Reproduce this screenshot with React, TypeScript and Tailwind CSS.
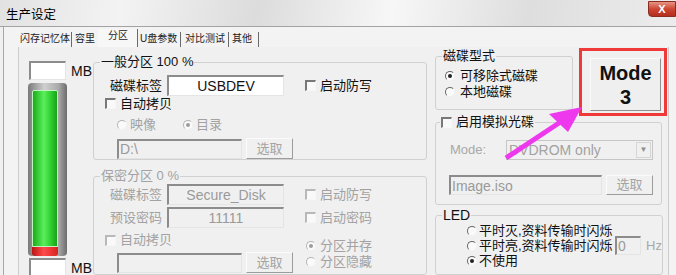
import React from "react";

const FONT = "font-['Liberation_Sans','Noto_Sans_CJK_SC',sans-serif]";

function Check({ dis }: { dis?: boolean }) {
  return (
    <span
      className={`inline-block w-[11px] h-[11px] shrink-0 border-t-2 border-l-2 border-b border-r border-b-[#f6f6f6] border-r-[#f6f6f6] bg-[#f9f9f9] ${
        dis ? "border-t-[#b8b8b8] border-l-[#b8b8b8]" : "border-t-[#787878] border-l-[#787878]"
      }`}
    />
  );
}

function Radio({ on, dis }: { on?: boolean; dis?: boolean }) {
  return (
    <span
      className={`inline-flex items-center justify-center w-[10px] h-[10px] shrink-0 rounded-full border-[1.5px] border-r-[#f2f2f2] border-b-[#f2f2f2] bg-[#fafafa] ${
        dis ? "border-t-[#b4b4b4] border-l-[#b4b4b4]" : "border-t-[#666666] border-l-[#666666]"
      }`}
    >
      {on && <span className={`w-[4px] h-[4px] rounded-full ${dis ? "bg-[#9c9c9c]" : "bg-[#222222]"}`} />}
    </span>
  );
}

function TextBox({
  className,
  children,
  dis,
  center,
}: {
  className: string;
  children?: React.ReactNode;
  dis?: boolean;
  center?: boolean;
}) {
  return (
    <div
      className={`${className} shrink-0 flex items-center border-t-2 border-l-2 border-b border-r border-t-[#8c8c8c] border-l-[#8c8c8c] border-b-[#e4e4e4] border-r-[#e4e4e4] text-[14px] leading-[16px] px-[1px] ${
        center ? "justify-center" : "justify-start"
      } ${dis ? "bg-[#f0f0f0] text-[#9a9a9a]" : "bg-white text-[#111111]"}`}
    >
      {children}
    </div>
  );
}

function SelBtn({ className }: { className: string }) {
  return (
    <div
      className={`${className} shrink-0 flex items-center justify-center border border-t-[#fbfbfb] border-l-[#fbfbfb] border-r-[#9c9c9c] border-b-[#9c9c9c] bg-[#f0f0f0] text-[13px] text-[#a4a4a4]`}
    >
      选取
    </div>
  );
}

export default function App() {
  return (
    <div className={`relative w-[676px] h-[275px] overflow-hidden bg-[#f0f0f0] text-[13px] leading-[16px] text-[#111111] ${FONT}`}>
      {/* Title bar */}
      <div className="h-[27px] border-b border-[#a3a3a3] flex items-start justify-between bg-[linear-gradient(100deg,#e2e2e2_0%,#f3f3f3_18%,#dcdcdc_38%,#f7f7f7_58%,#dedede_78%,#ececec_100%)]">
        <div className="pl-[6px] pt-[8px] text-[12.5px] leading-[14px] text-black">生产设定</div>
        <div className="mt-[1px] w-[28px] h-[16px] rounded-bl-[4px] border border-[#8c2b20] bg-[linear-gradient(to_bottom,#e69584,#cc4633_50%,#b52d1d)] flex items-center justify-center text-white font-bold text-[11px] leading-[11px]">
          X
        </div>
      </div>

      {/* Body */}
      <div className="ml-[3px] h-[248px] border-l border-[#a8a8a8] bg-[#f3f3f3]">
        {/* Tabs */}
        <div className="h-[20px] flex items-end text-[10px] leading-[14px] text-[#222222] whitespace-nowrap">
          <div className="w-[68px] h-[15px] pl-[16px] border-r border-[#6a6a6a]">闪存记忆体</div>
          <div className="w-[26px] h-[15px] pl-[3px]">容里</div>
          <div className="w-[40px] h-[18px] pl-[10px] border-r border-[#6a6a6a] bg-[#f7f7f7]">分区</div>
          <div className="w-[43px] h-[15px] pl-[2px] border-r border-[#6a6a6a]">U盘参数</div>
          <div className="w-[48px] h-[15px] pl-[4px] border-r border-[#6a6a6a]">对比测试</div>
          <div className="w-[30px] h-[15px] pl-[3px] border-r border-[#6a6a6a]">其他</div>
        </div>

        {/* Tab page */}
        <div className="ml-[14px] w-[651px] h-[228px] border-l border-r border-[#cdcdcd] bg-[#f0f0f0] flex">
          {/* Left column: capacity bar */}
          <div className="w-[74px] pl-[9px] flex flex-col">
            <div className="mt-[14px] flex items-center">
              <TextBox className="w-[37px] h-[19px] ml-[1px]" />
              <span className="ml-[5px] text-[14px]">MB</span>
            </div>
            <div className="mt-[3px] w-[39px] h-[180px] rounded-[4px] bg-[linear-gradient(to_right,#7a7a7a,#cfcfcf_42%,#a9a9a9_78%,#6c6c6c)] pt-[7px] pl-[4px]">
              <div className="w-[26px] h-[157px] rounded-t-[2px] border border-[#bff5bf] bg-[linear-gradient(to_right,#1aab1a,#5bef5b_45%,#33d133_72%,#17a317)]" />
              <div className="w-[26px] h-[9px] rounded-b-[3px] bg-[linear-gradient(to_right,#bd1313,#ff4b4b_45%,#d82222)]" />
            </div>
            <div className="mt-[2px] flex items-center">
              <TextBox className="w-[37px] h-[19px] ml-[1px]" />
              <span className="ml-[5px] text-[14px]">MB</span>
            </div>
          </div>

          {/* Middle column */}
          <div className="w-[334px] flex flex-col">
            <fieldset className="mt-[7px] h-[112px] border border-[#d0d0d0] rounded-[3px]">
              <legend className="ml-[6px] px-[1px] text-[13px] leading-[16px]">一般分区 100 %</legend>
              <div className="mt-[5px] h-[21px] flex items-center">
                <span className="ml-[16px] w-[57px]">磁碟标签</span>
                <TextBox className="w-[117px] h-[21px]" center>
                  USBDEV
                </TextBox>
                <span className="ml-[21px] flex items-center gap-[4px]">
                  <Check />
                  启动防写
                </span>
              </div>
              <div className="h-[15px] flex items-center ml-[11px] gap-[4px]">
                <Check />
                自动拷贝
              </div>
              <div className="mt-[6px] h-[16px] flex items-center ml-[23px] text-[#a2a2a2]">
                <Radio dis />
                <span className="ml-[3px] w-[53px]">映像</span>
                <Radio on dis />
                <span className="ml-[3px]">目录</span>
              </div>
              <div className="mt-[5px] flex items-center ml-[23px]">
                <TextBox className="w-[125px] h-[20px]" dis>
                  D:\
                </TextBox>
                <SelBtn className="ml-[4px] w-[47px] h-[21px]" />
              </div>
            </fieldset>

            <fieldset className="mt-[8px] h-[120px] border border-[#d0d0d0] rounded-[3px] text-[#a2a2a2]">
              <legend className="ml-[6px] px-[1px] text-[13px] leading-[16px]">保密分区 0 %</legend>
              <div className="h-[21px] flex items-center">
                <span className="ml-[16px] w-[57px]">磁碟标签</span>
                <TextBox className="w-[117px] h-[21px]" dis center>
                  Secure_Disk
                </TextBox>
                <span className="ml-[21px] flex items-center gap-[4px]">
                  <Check dis />
                  启动防写
                </span>
              </div>
              <div className="mt-[2px] h-[21px] flex items-center">
                <span className="ml-[16px] w-[57px]">预设密码</span>
                <TextBox className="w-[117px] h-[21px]" dis center>
                  11111
                </TextBox>
                <span className="ml-[21px] flex items-center gap-[4px]">
                  <Check dis />
                  启动密码
                </span>
              </div>
              <div className="mt-[4px] flex">
                <div className="ml-[11px] w-[201px] flex flex-col">
                  <div className="h-[16px] flex items-center gap-[4px]">
                    <Check dis />
                    自动拷贝
                  </div>
                  <div className="mt-[4px] ml-[12px] flex items-center">
                    <TextBox className="w-[125px] h-[20px]" dis />
                    <SelBtn className="ml-[4px] w-[47px] h-[21px]" />
                  </div>
                </div>
                <div className="mt-[6px] flex flex-col">
                  <div className="h-[16px] flex items-center gap-[4px]">
                    <Radio on dis />
                    分区并存
                  </div>
                  <div className="h-[16px] flex items-center gap-[4px]">
                    <Radio dis />
                    分区隐藏
                  </div>
                </div>
              </div>
            </fieldset>
          </div>

          {/* Right column */}
          <div className="ml-[8px] w-[232px] flex flex-col">
            <div className="flex items-start">
              <fieldset className="mt-[1px] w-[138px] h-[62px] border border-[#d0d0d0] rounded-[3px]">
                <legend className="ml-[6px] px-[1px] text-[13px] leading-[16px]">磁碟型式</legend>
                <div className="mt-[4px] h-[16px] flex items-center ml-[9px] gap-[5px]">
                  <Radio on />
                  可移除式磁碟
                </div>
                <div className="h-[16px] flex items-center ml-[9px] gap-[5px]">
                  <Radio />
                  本地磁碟
                </div>
              </fieldset>
              <div className="ml-[6px] mt-[1px] w-[88px] h-[68px] border-[3px] border-[#f03a3a] pl-[8px] pt-[7px]">
                <div className="w-[71px] h-[53px] border border-t-[#fafafa] border-l-[#fafafa] border-r-[#8f8f8f] border-b-[#8f8f8f] bg-[#efefef] flex flex-col items-center justify-center text-[20px] leading-[24px] font-bold text-[#111111]">
                  <span>Mode</span>
                  <span>3</span>
                </div>
              </div>
            </div>

            <fieldset className="-mt-[2px] w-[227px] h-[94px] border border-[#d0d0d0] rounded-[3px]">
              <legend className="ml-[4px] px-[1px] text-[13px] leading-[16px] flex items-center gap-[4px]">
                <Check />
                启用模拟光碟
              </legend>
              <div className="mt-[10px] flex items-center">
                <span className="ml-[14px] w-[56px] text-[13px] text-[#a8a8a8]">Mode:</span>
                <div className="w-[147px] h-[20px] flex items-center justify-between border border-[#c6c6c6] bg-[#f0f0f0] text-[14px] text-[#a2a2a2]">
                  <span className="pl-[2px]">DVDROM only</span>
                  <span className="w-[15px] h-[16px] mr-[1px] flex items-center justify-center border border-[#d6d6d6] text-[8px] leading-[8px] text-[#8f8f8f]">
                    ▼
                  </span>
                </div>
              </div>
              <div className="mt-[15px] flex items-center">
                <TextBox className="ml-[13px] w-[153px] h-[20px]" dis>
                  Image.iso
                </TextBox>
                <SelBtn className="ml-[4px] w-[47px] h-[20px]" />
              </div>
            </fieldset>

            <fieldset className="mt-[2px] w-[227px] h-[70px] border border-[#d0d0d0] rounded-[3px]">
              <legend className="ml-[6px] px-[1px] text-[14px] leading-[16px]">LED</legend>
              <div className="h-[15px] flex items-center ml-[31px] gap-[1px]">
                <Radio />
                <span className="ml-[1px]">平时灭,资料传输时闪烁</span>
              </div>
              <div className="h-[15px] flex items-center ml-[31px]">
                <Radio />
                <span className="ml-[2px] w-[130px] whitespace-nowrap">平时亮,资料传输时闪烁</span>
                <TextBox className="ml-[6px] w-[26px] h-[19px]" dis>
                  0
                </TextBox>
                <span className="ml-[5px] text-[13px] text-[#a8a8a8]">Hz</span>
              </div>
              <div className="h-[15px] flex items-center ml-[31px] gap-[2px]">
                <Radio on />
                不使用
              </div>
            </fieldset>
          </div>
        </div>
      </div>

      {/* Annotation arrow */}
      <svg className="absolute left-0 top-0 pointer-events-none" width="676" height="275" viewBox="0 0 676 275">
        <line x1="506" y1="158" x2="562" y2="121" stroke="#ee38ee" strokeWidth="5" />
        <polygon points="582,107 549,114 568,132" fill="#ee38ee" />
      </svg>
    </div>
  );
}
